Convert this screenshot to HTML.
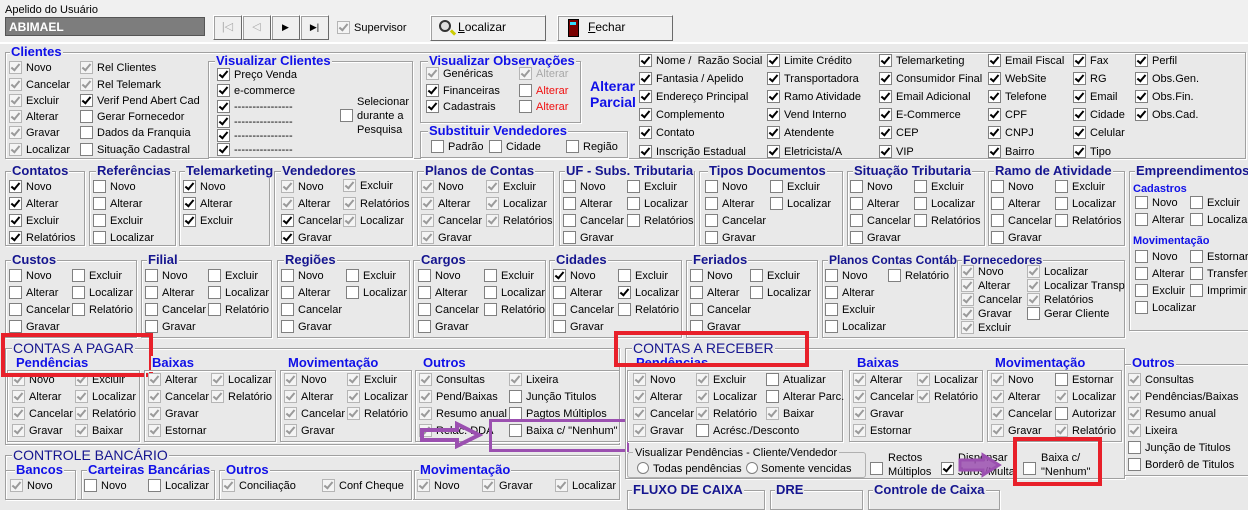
<!DOCTYPE html>
<html><head><meta charset="utf-8"><style>
*{box-sizing:border-box}
body{margin:0;width:1248px;height:495px;overflow:hidden;background:#e9e9e9;font-family:"Liberation Sans",sans-serif;font-size:11px;color:#000;position:relative}
.top{position:absolute;left:0;top:0;width:1248px;height:44px;background:#f0f0f0;border-bottom:2px solid #fff}
.bx{position:absolute;border:1px solid #a0a0a0;box-shadow:1px 1px 0 #fff inset,1px 1px 0 #fff}
.t{position:absolute;font-weight:bold;font-size:13px;line-height:14px;background:#e9e9e9;padding:0 1px;color:#15158f;white-space:nowrap}
.b{color:#1010e8}
.s{font-size:12px}
.r{position:absolute;line-height:14px;white-space:nowrap;height:14px}
.k{display:inline-block;width:13px;height:13px;background:#fff;border:1px solid #808080;vertical-align:top;margin-right:4px;position:relative}
.k.a::after,.k.g::after{content:"";position:absolute;left:3px;top:0px;width:3px;height:7px;border:solid #000;border-width:0 2px 2px 0;transform:rotate(40deg)}
.k.g{background:#f4f4f4;border-color:#b5b5b5}
.k.g::after{border-color:#9a9a9a}
.red{position:absolute;border:4px solid #e8202a}
.pur{position:absolute;border:3px solid #9b50b0}
.btn{position:absolute;background:#f0f0f0;border:1px solid #fff;border-right-color:#6a6a6a;border-bottom-color:#6a6a6a;box-shadow:1px 1px 0 #a0a0a0 inset}
.g{color:#a8a8a8}
.rd{color:#f01010}
</style></head><body>
<div class="top"></div>
<div class="r" style="left:5px;top:3px">Apelido do Usuário</div>
<div style="position:absolute;left:5px;top:17px;width:200px;height:19px;background:#7d7d7d;border:1px solid #555;color:#fff;font-weight:bold;font-size:12px;padding:2px 3px">ABIMAEL</div>
<div class="btn" style="left:213px;top:15px;width:29px;height:25px;color:#aaa;text-align:center;line-height:22px">|◁</div>
<div class="btn" style="left:242px;top:15px;width:29px;height:25px;color:#aaa;text-align:center;line-height:22px">◁</div>
<div class="btn" style="left:271px;top:15px;width:29px;height:25px;text-align:center;line-height:22px;font-size:9px">▶</div>
<div class="btn" style="left:300px;top:15px;width:29px;height:25px;text-align:center;line-height:22px;font-size:9px">▶|</div>
<div class="r" style="left:337px;top:21px"><i class="k g"></i>Supervisor</div>
<div class="btn" style="left:430px;top:15px;width:116px;height:26px;font-size:12px;line-height:23px;padding-left:27px"><span style="position:absolute;left:8px;top:4px;width:12px;height:12px;border:2px solid #333;border-radius:50%;background:#ddd"></span><span style="position:absolute;left:19px;top:15px;width:6px;height:3px;background:#cc0;transform:rotate(45deg)"></span><u>L</u>ocalizar</div>
<div class="btn" style="left:557px;top:15px;width:116px;height:26px;font-size:12px;line-height:23px;padding-left:30px"><span style="position:absolute;left:10px;top:3px;width:11px;height:18px;background:#7a0000;border:1px solid #000"></span><span style="position:absolute;left:12px;top:6px;width:6px;height:3px;background:#3df"></span><u>F</u>echar</div>

<!-- Clientes -->
<div class="bx" style="left:5px;top:52px;width:1241px;height:107px"></div>
<div class="t b" style="left:10px;top:45px">Clientes</div>
<div class="r" style="left:9px;top:61px"><i class="k g"></i>Novo</div>
<div class="r" style="left:9px;top:78px"><i class="k g"></i>Cancelar</div>
<div class="r" style="left:9px;top:94px"><i class="k g"></i>Excluir</div>
<div class="r" style="left:9px;top:110px"><i class="k g"></i>Alterar</div>
<div class="r" style="left:9px;top:126px"><i class="k g"></i>Gravar</div>
<div class="r" style="left:9px;top:143px"><i class="k g"></i>Localizar</div>
<div class="r" style="left:80px;top:61px"><i class="k g"></i>Rel Clientes</div>
<div class="r" style="left:80px;top:78px"><i class="k g"></i>Rel Telemark</div>
<div class="r" style="left:80px;top:94px"><i class="k a"></i>Verif Pend Abert Cad</div>
<div class="r" style="left:80px;top:110px"><i class="k"></i>Gerar Fornecedor</div>
<div class="r" style="left:80px;top:126px"><i class="k"></i>Dados da Franquia</div>
<div class="r" style="left:80px;top:143px"><i class="k"></i>Situação Cadastral</div>

<div class="bx" style="left:208px;top:61px;width:205px;height:97px"></div>
<div class="t b" style="left:215px;top:54px">Visualizar Clientes</div>
<div class="r" style="left:217px;top:68px"><i class="k a"></i>Preço Venda</div>
<div class="r" style="left:217px;top:84px"><i class="k a"></i>e-commerce</div>
<div class="r" style="left:217px;top:100px"><i class="k a"></i>----------------</div>
<div class="r" style="left:217px;top:115px"><i class="k a"></i>----------------</div>
<div class="r" style="left:217px;top:129px"><i class="k a"></i>----------------</div>
<div class="r" style="left:217px;top:143px"><i class="k a"></i>----------------</div>
<div class="r" style="left:340px;top:109px"><i class="k"></i></div>
<div class="r" style="left:357px;top:95px;height:42px">Selecionar<br>durante a<br>Pesquisa</div>

<div class="bx" style="left:420px;top:61px;width:161px;height:62px"></div>
<div class="t b" style="left:428px;top:54px">Visualizar Observações</div>
<div class="r" style="left:426px;top:67px"><i class="k g"></i>Genéricas</div>
<div class="r" style="left:426px;top:84px"><i class="k a"></i>Financeiras</div>
<div class="r" style="left:426px;top:100px"><i class="k a"></i>Cadastrais</div>
<div class="r g" style="left:519px;top:67px"><i class="k g"></i>Alterar</div>
<div class="r rd" style="left:519px;top:84px"><i class="k"></i>Alterar</div>
<div class="r rd" style="left:519px;top:100px"><i class="k"></i>Alterar</div>

<div class="bx" style="left:420px;top:131px;width:208px;height:27px"></div>
<div class="t b" style="left:428px;top:124px">Substituir Vendedores</div>
<div class="r" style="left:431px;top:140px"><i class="k"></i>Padrão</div>
<div class="r" style="left:489px;top:140px"><i class="k"></i>Cidade</div>
<div class="r" style="left:566px;top:140px"><i class="k"></i>Região</div>

<div class="t b" style="left:589px;top:78px;font-size:14px;line-height:16px;background:none">Alterar<br>Parcial</div>
<div class="r" style="left:639px;top:54px"><i class="k a"></i>Nome /&nbsp; Razão Social</div>
<div class="r" style="left:639px;top:72px"><i class="k a"></i>Fantasia / Apelido</div>
<div class="r" style="left:639px;top:90px"><i class="k a"></i>Endereço Principal</div>
<div class="r" style="left:639px;top:108px"><i class="k a"></i>Complemento</div>
<div class="r" style="left:639px;top:126px"><i class="k a"></i>Contato</div>
<div class="r" style="left:639px;top:145px"><i class="k a"></i>Inscrição Estadual</div>
<div class="r" style="left:767px;top:54px"><i class="k a"></i>Limite Crédito</div>
<div class="r" style="left:767px;top:72px"><i class="k a"></i>Transportadora</div>
<div class="r" style="left:767px;top:90px"><i class="k a"></i>Ramo Atividade</div>
<div class="r" style="left:767px;top:108px"><i class="k a"></i>Vend Interno</div>
<div class="r" style="left:767px;top:126px"><i class="k a"></i>Atendente</div>
<div class="r" style="left:767px;top:145px"><i class="k a"></i>Eletricista/A</div>
<div class="r" style="left:879px;top:54px"><i class="k a"></i>Telemarketing</div>
<div class="r" style="left:879px;top:72px"><i class="k a"></i>Consumidor Final</div>
<div class="r" style="left:879px;top:90px"><i class="k a"></i>Email Adicional</div>
<div class="r" style="left:879px;top:108px"><i class="k a"></i>E-Commerce</div>
<div class="r" style="left:879px;top:126px"><i class="k a"></i>CEP</div>
<div class="r" style="left:879px;top:145px"><i class="k a"></i>VIP</div>
<div class="r" style="left:988px;top:54px"><i class="k a"></i>Email Fiscal</div>
<div class="r" style="left:988px;top:72px"><i class="k a"></i>WebSite</div>
<div class="r" style="left:988px;top:90px"><i class="k a"></i>Telefone</div>
<div class="r" style="left:988px;top:108px"><i class="k a"></i>CPF</div>
<div class="r" style="left:988px;top:126px"><i class="k a"></i>CNPJ</div>
<div class="r" style="left:988px;top:145px"><i class="k a"></i>Bairro</div>
<div class="r" style="left:1073px;top:54px"><i class="k a"></i>Fax</div>
<div class="r" style="left:1073px;top:72px"><i class="k a"></i>RG</div>
<div class="r" style="left:1073px;top:90px"><i class="k a"></i>Email</div>
<div class="r" style="left:1073px;top:108px"><i class="k a"></i>Cidade</div>
<div class="r" style="left:1073px;top:126px"><i class="k a"></i>Celular</div>
<div class="r" style="left:1073px;top:145px"><i class="k a"></i>Tipo</div>
<div class="r" style="left:1135px;top:54px"><i class="k a"></i>Perfil</div>
<div class="r" style="left:1135px;top:72px"><i class="k a"></i>Obs.Gen.</div>
<div class="r" style="left:1135px;top:90px"><i class="k a"></i>Obs.Fin.</div>
<div class="r" style="left:1135px;top:108px"><i class="k a"></i>Obs.Cad.</div>

<!-- Row 2 -->
<div class="bx" style="left:5px;top:171px;width:80px;height:75px"></div>
<div class="t" style="left:11px;top:164px">Contatos</div>
<div class="r" style="left:9px;top:180px"><i class="k a"></i>Novo</div>
<div class="r" style="left:9px;top:197px"><i class="k a"></i>Alterar</div>
<div class="r" style="left:9px;top:214px"><i class="k a"></i>Excluir</div>
<div class="r" style="left:9px;top:231px"><i class="k a"></i>Relatórios</div>

<div class="bx" style="left:89px;top:171px;width:87px;height:75px"></div>
<div class="t" style="left:96px;top:164px">Referências</div>
<div class="r" style="left:93px;top:180px"><i class="k"></i>Novo</div>
<div class="r" style="left:93px;top:197px"><i class="k"></i>Alterar</div>
<div class="r" style="left:93px;top:214px"><i class="k"></i>Excluir</div>
<div class="r" style="left:93px;top:231px"><i class="k"></i>Localizar</div>

<div class="bx" style="left:179px;top:171px;width:91px;height:75px"></div>
<div class="t" style="left:185px;top:164px">Telemarketing</div>
<div class="r" style="left:183px;top:180px"><i class="k a"></i>Novo</div>
<div class="r" style="left:183px;top:197px"><i class="k a"></i>Alterar</div>
<div class="r" style="left:183px;top:214px"><i class="k a"></i>Excluir</div>

<div class="bx" style="left:274px;top:171px;width:139px;height:75px"></div>
<div class="t" style="left:281px;top:164px">Vendedores</div>
<div class="r" style="left:281px;top:180px"><i class="k g"></i>Novo</div>
<div class="r" style="left:281px;top:197px"><i class="k g"></i>Alterar</div>
<div class="r" style="left:281px;top:214px"><i class="k a"></i>Cancelar</div>
<div class="r" style="left:281px;top:231px"><i class="k a"></i>Gravar</div>
<div class="r" style="left:343px;top:179px"><i class="k g"></i>Excluir</div>
<div class="r" style="left:343px;top:197px"><i class="k g"></i>Relatórios</div>
<div class="r" style="left:343px;top:214px"><i class="k g"></i>Localizar</div>

<div class="bx" style="left:417px;top:171px;width:137px;height:75px"></div>
<div class="t" style="left:424px;top:164px">Planos de Contas</div>
<div class="r" style="left:421px;top:180px"><i class="k g"></i>Novo</div>
<div class="r" style="left:421px;top:197px"><i class="k g"></i>Alterar</div>
<div class="r" style="left:421px;top:214px"><i class="k g"></i>Cancelar</div>
<div class="r" style="left:421px;top:231px"><i class="k g"></i>Gravar</div>
<div class="r" style="left:486px;top:180px"><i class="k g"></i>Excluir</div>
<div class="r" style="left:486px;top:197px"><i class="k g"></i>Localizar</div>
<div class="r" style="left:486px;top:214px"><i class="k g"></i>Relatórios</div>

<div class="bx" style="left:559px;top:171px;width:136px;height:75px"></div>
<div class="t" style="left:565px;top:164px">UF - Subs. Tributaria</div>
<div class="r" style="left:563px;top:180px"><i class="k"></i>Novo</div>
<div class="r" style="left:563px;top:197px"><i class="k"></i>Alterar</div>
<div class="r" style="left:563px;top:214px"><i class="k"></i>Cancelar</div>
<div class="r" style="left:563px;top:231px"><i class="k"></i>Gravar</div>
<div class="r" style="left:627px;top:180px"><i class="k"></i>Excluir</div>
<div class="r" style="left:627px;top:197px"><i class="k"></i>Localizar</div>
<div class="r" style="left:627px;top:214px"><i class="k"></i>Relatórios</div>

<div class="bx" style="left:699px;top:171px;width:144px;height:75px"></div>
<div class="t" style="left:708px;top:164px">Tipos Documentos</div>
<div class="r" style="left:705px;top:180px"><i class="k"></i>Novo</div>
<div class="r" style="left:705px;top:197px"><i class="k"></i>Alterar</div>
<div class="r" style="left:705px;top:214px"><i class="k"></i>Cancelar</div>
<div class="r" style="left:705px;top:231px"><i class="k"></i>Gravar</div>
<div class="r" style="left:770px;top:180px"><i class="k"></i>Excluir</div>
<div class="r" style="left:770px;top:197px"><i class="k"></i>Localizar</div>

<div class="bx" style="left:847px;top:171px;width:138px;height:75px"></div>
<div class="t" style="left:853px;top:164px">Situação Tributaria</div>
<div class="r" style="left:850px;top:180px"><i class="k"></i>Novo</div>
<div class="r" style="left:850px;top:197px"><i class="k"></i>Alterar</div>
<div class="r" style="left:850px;top:214px"><i class="k"></i>Cancelar</div>
<div class="r" style="left:850px;top:231px"><i class="k"></i>Gravar</div>
<div class="r" style="left:914px;top:180px"><i class="k"></i>Excluir</div>
<div class="r" style="left:914px;top:197px"><i class="k"></i>Localizar</div>
<div class="r" style="left:914px;top:214px"><i class="k"></i>Relatórios</div>

<div class="bx" style="left:988px;top:171px;width:137px;height:75px"></div>
<div class="t" style="left:994px;top:164px">Ramo de Atividade</div>
<div class="r" style="left:991px;top:180px"><i class="k"></i>Novo</div>
<div class="r" style="left:991px;top:197px"><i class="k"></i>Alterar</div>
<div class="r" style="left:991px;top:214px"><i class="k"></i>Cancelar</div>
<div class="r" style="left:991px;top:231px"><i class="k"></i>Gravar</div>
<div class="r" style="left:1055px;top:180px"><i class="k"></i>Excluir</div>
<div class="r" style="left:1055px;top:197px"><i class="k"></i>Localizar</div>
<div class="r" style="left:1055px;top:214px"><i class="k"></i>Relatórios</div>

<div class="bx" style="left:1129px;top:171px;width:125px;height:160px"></div>
<div class="t" style="left:1135px;top:164px">Empreendimentos</div>
<div class="t b s" style="left:1132px;top:182px;font-size:11px">Cadastros</div>
<div class="r" style="left:1135px;top:196px"><i class="k"></i>Novo</div>
<div class="r" style="left:1135px;top:213px"><i class="k"></i>Alterar</div>
<div class="r" style="left:1190px;top:196px"><i class="k"></i>Excluir</div>
<div class="r" style="left:1190px;top:213px"><i class="k"></i>Localizar</div>
<div class="t b s" style="left:1132px;top:234px;font-size:11px">Movimentação</div>
<div class="r" style="left:1135px;top:250px"><i class="k"></i>Novo</div>
<div class="r" style="left:1135px;top:267px"><i class="k"></i>Alterar</div>
<div class="r" style="left:1135px;top:284px"><i class="k"></i>Excluir</div>
<div class="r" style="left:1135px;top:301px"><i class="k"></i>Localizar</div>
<div class="r" style="left:1190px;top:250px"><i class="k"></i>Estornar</div>
<div class="r" style="left:1190px;top:267px"><i class="k"></i>Transferir</div>
<div class="r" style="left:1190px;top:284px"><i class="k"></i>Imprimir</div>

<!-- Row 3 -->
<div class="bx" style="left:5px;top:260px;width:132px;height:78px"></div>
<div class="t" style="left:11px;top:253px">Custos</div>
<div class="r" style="left:9px;top:269px"><i class="k"></i>Novo</div>
<div class="r" style="left:9px;top:286px"><i class="k"></i>Alterar</div>
<div class="r" style="left:9px;top:303px"><i class="k"></i>Cancelar</div>
<div class="r" style="left:9px;top:320px"><i class="k"></i>Gravar</div>
<div class="r" style="left:72px;top:269px"><i class="k"></i>Excluir</div>
<div class="r" style="left:72px;top:286px"><i class="k"></i>Localizar</div>
<div class="r" style="left:72px;top:303px"><i class="k"></i>Relatório</div>

<div class="bx" style="left:141px;top:260px;width:131px;height:78px"></div>
<div class="t" style="left:147px;top:253px">Filial</div>
<div class="r" style="left:145px;top:269px"><i class="k"></i>Novo</div>
<div class="r" style="left:145px;top:286px"><i class="k"></i>Alterar</div>
<div class="r" style="left:145px;top:303px"><i class="k"></i>Cancelar</div>
<div class="r" style="left:145px;top:320px"><i class="k"></i>Gravar</div>
<div class="r" style="left:208px;top:269px"><i class="k"></i>Excluir</div>
<div class="r" style="left:208px;top:286px"><i class="k"></i>Localizar</div>
<div class="r" style="left:208px;top:303px"><i class="k"></i>Relatório</div>

<div class="bx" style="left:277px;top:260px;width:133px;height:78px"></div>
<div class="t" style="left:284px;top:253px">Regiões</div>
<div class="r" style="left:281px;top:269px"><i class="k"></i>Novo</div>
<div class="r" style="left:281px;top:286px"><i class="k"></i>Alterar</div>
<div class="r" style="left:281px;top:303px"><i class="k"></i>Cancelar</div>
<div class="r" style="left:281px;top:320px"><i class="k"></i>Gravar</div>
<div class="r" style="left:346px;top:269px"><i class="k"></i>Excluir</div>
<div class="r" style="left:346px;top:286px"><i class="k"></i>Localizar</div>

<div class="bx" style="left:413px;top:260px;width:133px;height:78px"></div>
<div class="t" style="left:420px;top:253px">Cargos</div>
<div class="r" style="left:418px;top:269px"><i class="k"></i>Novo</div>
<div class="r" style="left:418px;top:286px"><i class="k"></i>Alterar</div>
<div class="r" style="left:418px;top:303px"><i class="k"></i>Cancelar</div>
<div class="r" style="left:418px;top:320px"><i class="k"></i>Gravar</div>
<div class="r" style="left:484px;top:269px"><i class="k"></i>Excluir</div>
<div class="r" style="left:484px;top:286px"><i class="k"></i>Localizar</div>
<div class="r" style="left:484px;top:303px"><i class="k"></i>Relatório</div>

<div class="bx" style="left:549px;top:260px;width:133px;height:78px"></div>
<div class="t" style="left:555px;top:253px">Cidades</div>
<div class="r" style="left:553px;top:269px"><i class="k a"></i>Novo</div>
<div class="r" style="left:553px;top:286px"><i class="k"></i>Alterar</div>
<div class="r" style="left:553px;top:303px"><i class="k"></i>Cancelar</div>
<div class="r" style="left:553px;top:320px"><i class="k"></i>Gravar</div>
<div class="r" style="left:618px;top:269px"><i class="k"></i>Excluir</div>
<div class="r" style="left:618px;top:286px"><i class="k a"></i>Localizar</div>
<div class="r" style="left:618px;top:303px"><i class="k"></i>Relatório</div>

<div class="bx" style="left:686px;top:260px;width:132px;height:78px"></div>
<div class="t" style="left:692px;top:253px">Feriados</div>
<div class="r" style="left:690px;top:269px"><i class="k"></i>Novo</div>
<div class="r" style="left:690px;top:286px"><i class="k"></i>Alterar</div>
<div class="r" style="left:690px;top:303px"><i class="k"></i>Cancelar</div>
<div class="r" style="left:690px;top:320px"><i class="k"></i>Gravar</div>
<div class="r" style="left:750px;top:269px"><i class="k"></i>Excluir</div>
<div class="r" style="left:750px;top:286px"><i class="k"></i>Localizar</div>

<div class="bx" style="left:822px;top:260px;width:133px;height:78px"></div>
<div class="t" style="left:828px;top:253px;font-size:12px">Planos Contas Contáb</div>
<div class="r" style="left:825px;top:269px"><i class="k"></i>Novo</div>
<div class="r" style="left:825px;top:286px"><i class="k"></i>Alterar</div>
<div class="r" style="left:825px;top:303px"><i class="k"></i>Excluir</div>
<div class="r" style="left:825px;top:320px"><i class="k"></i>Localizar</div>
<div class="r" style="left:888px;top:269px"><i class="k"></i>Relatório</div>

<div class="bx" style="left:957px;top:260px;width:168px;height:78px"></div>
<div class="t" style="left:962px;top:253px;font-size:12px">Fornecedores</div>
<div class="r" style="left:961px;top:265px"><i class="k g"></i>Novo</div>
<div class="r" style="left:961px;top:279px"><i class="k g"></i>Alterar</div>
<div class="r" style="left:961px;top:293px"><i class="k g"></i>Cancelar</div>
<div class="r" style="left:961px;top:307px"><i class="k g"></i>Gravar</div>
<div class="r" style="left:961px;top:321px"><i class="k g"></i>Excluir</div>
<div class="r" style="left:1027px;top:265px"><i class="k g"></i>Localizar</div>
<div class="r" style="left:1027px;top:279px"><i class="k g"></i>Localizar Transp</div>
<div class="r" style="left:1027px;top:293px"><i class="k g"></i>Relatórios</div>
<div class="r" style="left:1027px;top:307px"><i class="k"></i>Gerar Cliente</div>

<!-- CONTAS A PAGAR -->
<div class="bx" style="left:5px;top:348px;width:615px;height:97px"></div>
<div class="t" style="left:12px;top:340px;font-weight:normal;font-size:14px;line-height:16px">CONTAS A PAGAR</div>
<div class="bx" style="left:7px;top:370px;width:133px;height:72px"></div>
<div class="t b" style="left:15px;top:356px">Pendências</div>
<div class="r" style="left:12px;top:373px"><i class="k g"></i>Novo</div>
<div class="r" style="left:12px;top:390px"><i class="k g"></i>Alterar</div>
<div class="r" style="left:12px;top:407px"><i class="k g"></i>Cancelar</div>
<div class="r" style="left:12px;top:424px"><i class="k g"></i>Gravar</div>
<div class="r" style="left:75px;top:373px"><i class="k g"></i>Excluir</div>
<div class="r" style="left:75px;top:390px"><i class="k g"></i>Localizar</div>
<div class="r" style="left:75px;top:407px"><i class="k g"></i>Relatório</div>
<div class="r" style="left:75px;top:424px"><i class="k g"></i>Baixar</div>
<div class="red" style="left:1px;top:333px;width:152px;height:44px"></div>

<div class="bx" style="left:144px;top:370px;width:132px;height:72px"></div>
<div class="t b" style="left:151px;top:356px">Baixas</div>
<div class="r" style="left:148px;top:373px"><i class="k g"></i>Alterar</div>
<div class="r" style="left:148px;top:390px"><i class="k g"></i>Cancelar</div>
<div class="r" style="left:148px;top:407px"><i class="k g"></i>Gravar</div>
<div class="r" style="left:148px;top:424px"><i class="k g"></i>Estornar</div>
<div class="r" style="left:211px;top:373px"><i class="k g"></i>Localizar</div>
<div class="r" style="left:211px;top:390px"><i class="k g"></i>Relatório</div>

<div class="bx" style="left:280px;top:370px;width:132px;height:72px"></div>
<div class="t b" style="left:287px;top:356px">Movimentação</div>
<div class="r" style="left:284px;top:373px"><i class="k g"></i>Novo</div>
<div class="r" style="left:284px;top:390px"><i class="k g"></i>Alterar</div>
<div class="r" style="left:284px;top:407px"><i class="k g"></i>Cancelar</div>
<div class="r" style="left:284px;top:424px"><i class="k g"></i>Gravar</div>
<div class="r" style="left:347px;top:373px"><i class="k g"></i>Excluir</div>
<div class="r" style="left:347px;top:390px"><i class="k g"></i>Localizar</div>
<div class="r" style="left:347px;top:407px"><i class="k g"></i>Relatório</div>

<div class="bx" style="left:415px;top:370px;width:205px;height:72px"></div>
<div class="t b" style="left:422px;top:356px">Outros</div>
<div class="r" style="left:419px;top:373px"><i class="k g"></i>Consultas</div>
<div class="r" style="left:419px;top:390px"><i class="k g"></i>Pend/Baixas</div>
<div class="r" style="left:419px;top:407px"><i class="k g"></i>Resumo anual</div>
<div class="r" style="left:419px;top:424px"><i class="k g"></i>Relac. DDA</div>
<div class="r" style="left:509px;top:373px"><i class="k g"></i>Lixeira</div>
<div class="r" style="left:509px;top:390px"><i class="k"></i>Junção Titulos</div>
<div class="r" style="left:509px;top:407px"><i class="k"></i>Pagtos Múltiplos</div>
<div class="r" style="left:509px;top:424px"><i class="k"></i>Baixa c/ "Nenhum"</div>
<div class="pur" style="left:489px;top:419px;width:140px;height:33px"></div>
<svg style="position:absolute;left:419px;top:421px" width="64" height="28"><path d="M3 9 H38 V3 L60 14 L38 25 V19 H3 Z" fill="none" stroke="#9b50b0" stroke-width="4"/></svg>

<!-- CONTAS A RECEBER -->
<div class="bx" style="left:625px;top:348px;width:500px;height:131px"></div>
<div class="t" style="left:632px;top:340px;font-weight:normal;font-size:14px;line-height:16px">CONTAS A RECEBER</div>
<div class="bx" style="left:627px;top:370px;width:216px;height:72px"></div>
<div class="t b" style="left:635px;top:356px">Pendências</div>
<div class="red" style="left:614px;top:331px;width:195px;height:36px"></div>
<div class="r" style="left:633px;top:373px"><i class="k g"></i>Novo</div>
<div class="r" style="left:633px;top:390px"><i class="k g"></i>Alterar</div>
<div class="r" style="left:633px;top:407px"><i class="k g"></i>Cancelar</div>
<div class="r" style="left:633px;top:424px"><i class="k g"></i>Gravar</div>
<div class="r" style="left:696px;top:373px"><i class="k g"></i>Excluir</div>
<div class="r" style="left:696px;top:390px"><i class="k g"></i>Localizar</div>
<div class="r" style="left:696px;top:407px"><i class="k g"></i>Relatório</div>
<div class="r" style="left:696px;top:424px"><i class="k"></i>Acrésc./Desconto</div>
<div class="r" style="left:766px;top:373px"><i class="k"></i>Atualizar</div>
<div class="r" style="left:766px;top:390px"><i class="k"></i>Alterar Parc.</div>
<div class="r" style="left:766px;top:407px"><i class="k g"></i>Baixar</div>

<div class="bx" style="left:849px;top:370px;width:134px;height:72px"></div>
<div class="t b" style="left:856px;top:356px">Baixas</div>
<div class="r" style="left:853px;top:373px"><i class="k g"></i>Alterar</div>
<div class="r" style="left:853px;top:390px"><i class="k g"></i>Cancelar</div>
<div class="r" style="left:853px;top:407px"><i class="k g"></i>Gravar</div>
<div class="r" style="left:853px;top:424px"><i class="k g"></i>Estornar</div>
<div class="r" style="left:917px;top:373px"><i class="k g"></i>Localizar</div>
<div class="r" style="left:917px;top:390px"><i class="k g"></i>Relatório</div>

<div class="bx" style="left:987px;top:370px;width:135px;height:72px"></div>
<div class="t b" style="left:994px;top:356px">Movimentação</div>
<div class="r" style="left:991px;top:373px"><i class="k g"></i>Novo</div>
<div class="r" style="left:991px;top:390px"><i class="k g"></i>Alterar</div>
<div class="r" style="left:991px;top:407px"><i class="k g"></i>Cancelar</div>
<div class="r" style="left:991px;top:424px"><i class="k g"></i>Gravar</div>
<div class="r" style="left:1055px;top:373px"><i class="k"></i>Estornar</div>
<div class="r" style="left:1055px;top:390px"><i class="k g"></i>Localizar</div>
<div class="r" style="left:1055px;top:407px"><i class="k"></i>Autorizar</div>
<div class="r" style="left:1055px;top:424px"><i class="k g"></i>Relatório</div>

<div class="bx" style="left:1124px;top:364px;width:130px;height:112px"></div>
<div class="t b" style="left:1131px;top:356px">Outros</div>
<div class="r" style="left:1128px;top:373px"><i class="k g"></i>Consultas</div>
<div class="r" style="left:1128px;top:390px"><i class="k g"></i>Pendências/Baixas</div>
<div class="r" style="left:1128px;top:407px"><i class="k g"></i>Resumo anual</div>
<div class="r" style="left:1128px;top:424px"><i class="k g"></i>Lixeira</div>
<div class="r" style="left:1128px;top:441px"><i class="k"></i>Junção de Titulos</div>
<div class="r" style="left:1128px;top:458px"><i class="k"></i>Borderô de Titulos</div>

<div style="position:absolute;left:627px;top:452px;width:239px;height:26px;border:1px solid #b0b0b0;border-radius:3px"></div>
<div class="r" style="left:633px;top:446px;background:#e9e9e9;padding:0 2px">Visualizar Pendências - Cliente/Vendedor</div>
<div class="r" style="left:637px;top:462px"><i class="k" style="border-radius:50%;width:12px;height:12px"></i>Todas pendências</div>
<div class="r" style="left:746px;top:462px"><i class="k" style="border-radius:50%;width:12px;height:12px;margin-right:3px"></i>Somente vencidas</div>
<div class="r" style="left:870px;top:462px"><i class="k"></i></div>
<div class="r" style="left:888px;top:451px;height:30px">Rectos<br>Múltiplos</div>
<div class="r" style="left:941px;top:462px"><i class="k a"></i></div>
<div class="r" style="left:958px;top:451px;height:30px">Dispensar<br>Juros/Multa</div>
<svg style="position:absolute;left:957px;top:452px" width="46" height="26"><path d="M3 8 H26 V3 L42 13 L26 23 V18 H3 Z" fill="#9b50b0" fill-opacity=".85" stroke="#9b50b0" stroke-width="3"/></svg>
<div class="r" style="left:1023px;top:462px"><i class="k"></i></div>
<div class="r" style="left:1041px;top:451px;height:30px">Baixa c/<br>"Nenhum"</div>
<div class="red" style="left:1013px;top:437px;width:89px;height:49px"></div>

<!-- CONTROLE BANCÁRIO -->
<div class="bx" style="left:5px;top:455px;width:615px;height:45px"></div>
<div class="t" style="left:12px;top:447px;font-weight:normal;font-size:14px;line-height:16px">CONTROLE BANCÁRIO</div>
<div class="bx" style="left:5px;top:470px;width:71px;height:30px"></div>
<div class="t b" style="left:15px;top:463px">Bancos</div>
<div class="r" style="left:10px;top:479px"><i class="k g"></i>Novo</div>
<div class="bx" style="left:81px;top:470px;width:134px;height:30px"></div>
<div class="t b" style="left:87px;top:463px">Carteiras Bancárias</div>
<div class="r" style="left:84px;top:479px"><i class="k"></i>Novo</div>
<div class="r" style="left:148px;top:479px"><i class="k"></i>Localizar</div>
<div class="bx" style="left:219px;top:470px;width:193px;height:30px"></div>
<div class="t b" style="left:225px;top:463px">Outros</div>
<div class="r" style="left:222px;top:479px"><i class="k g"></i>Conciliação</div>
<div class="r" style="left:322px;top:479px"><i class="k g"></i>Conf Cheque</div>
<div class="bx" style="left:414px;top:470px;width:206px;height:30px"></div>
<div class="t b" style="left:419px;top:463px">Movimentação</div>
<div class="r" style="left:417px;top:479px"><i class="k g"></i>Novo</div>
<div class="r" style="left:482px;top:479px"><i class="k g"></i>Gravar</div>
<div class="r" style="left:555px;top:479px"><i class="k g"></i>Localizar</div>

<div class="bx" style="left:627px;top:490px;width:138px;height:20px"></div>
<div class="t" style="left:632px;top:483px">FLUXO DE CAIXA</div>
<div class="bx" style="left:770px;top:490px;width:93px;height:20px"></div>
<div class="t" style="left:775px;top:483px">DRE</div>
<div class="bx" style="left:868px;top:490px;width:132px;height:20px"></div>
<div class="t" style="left:873px;top:483px">Controle de Caixa</div>
</body></html>
